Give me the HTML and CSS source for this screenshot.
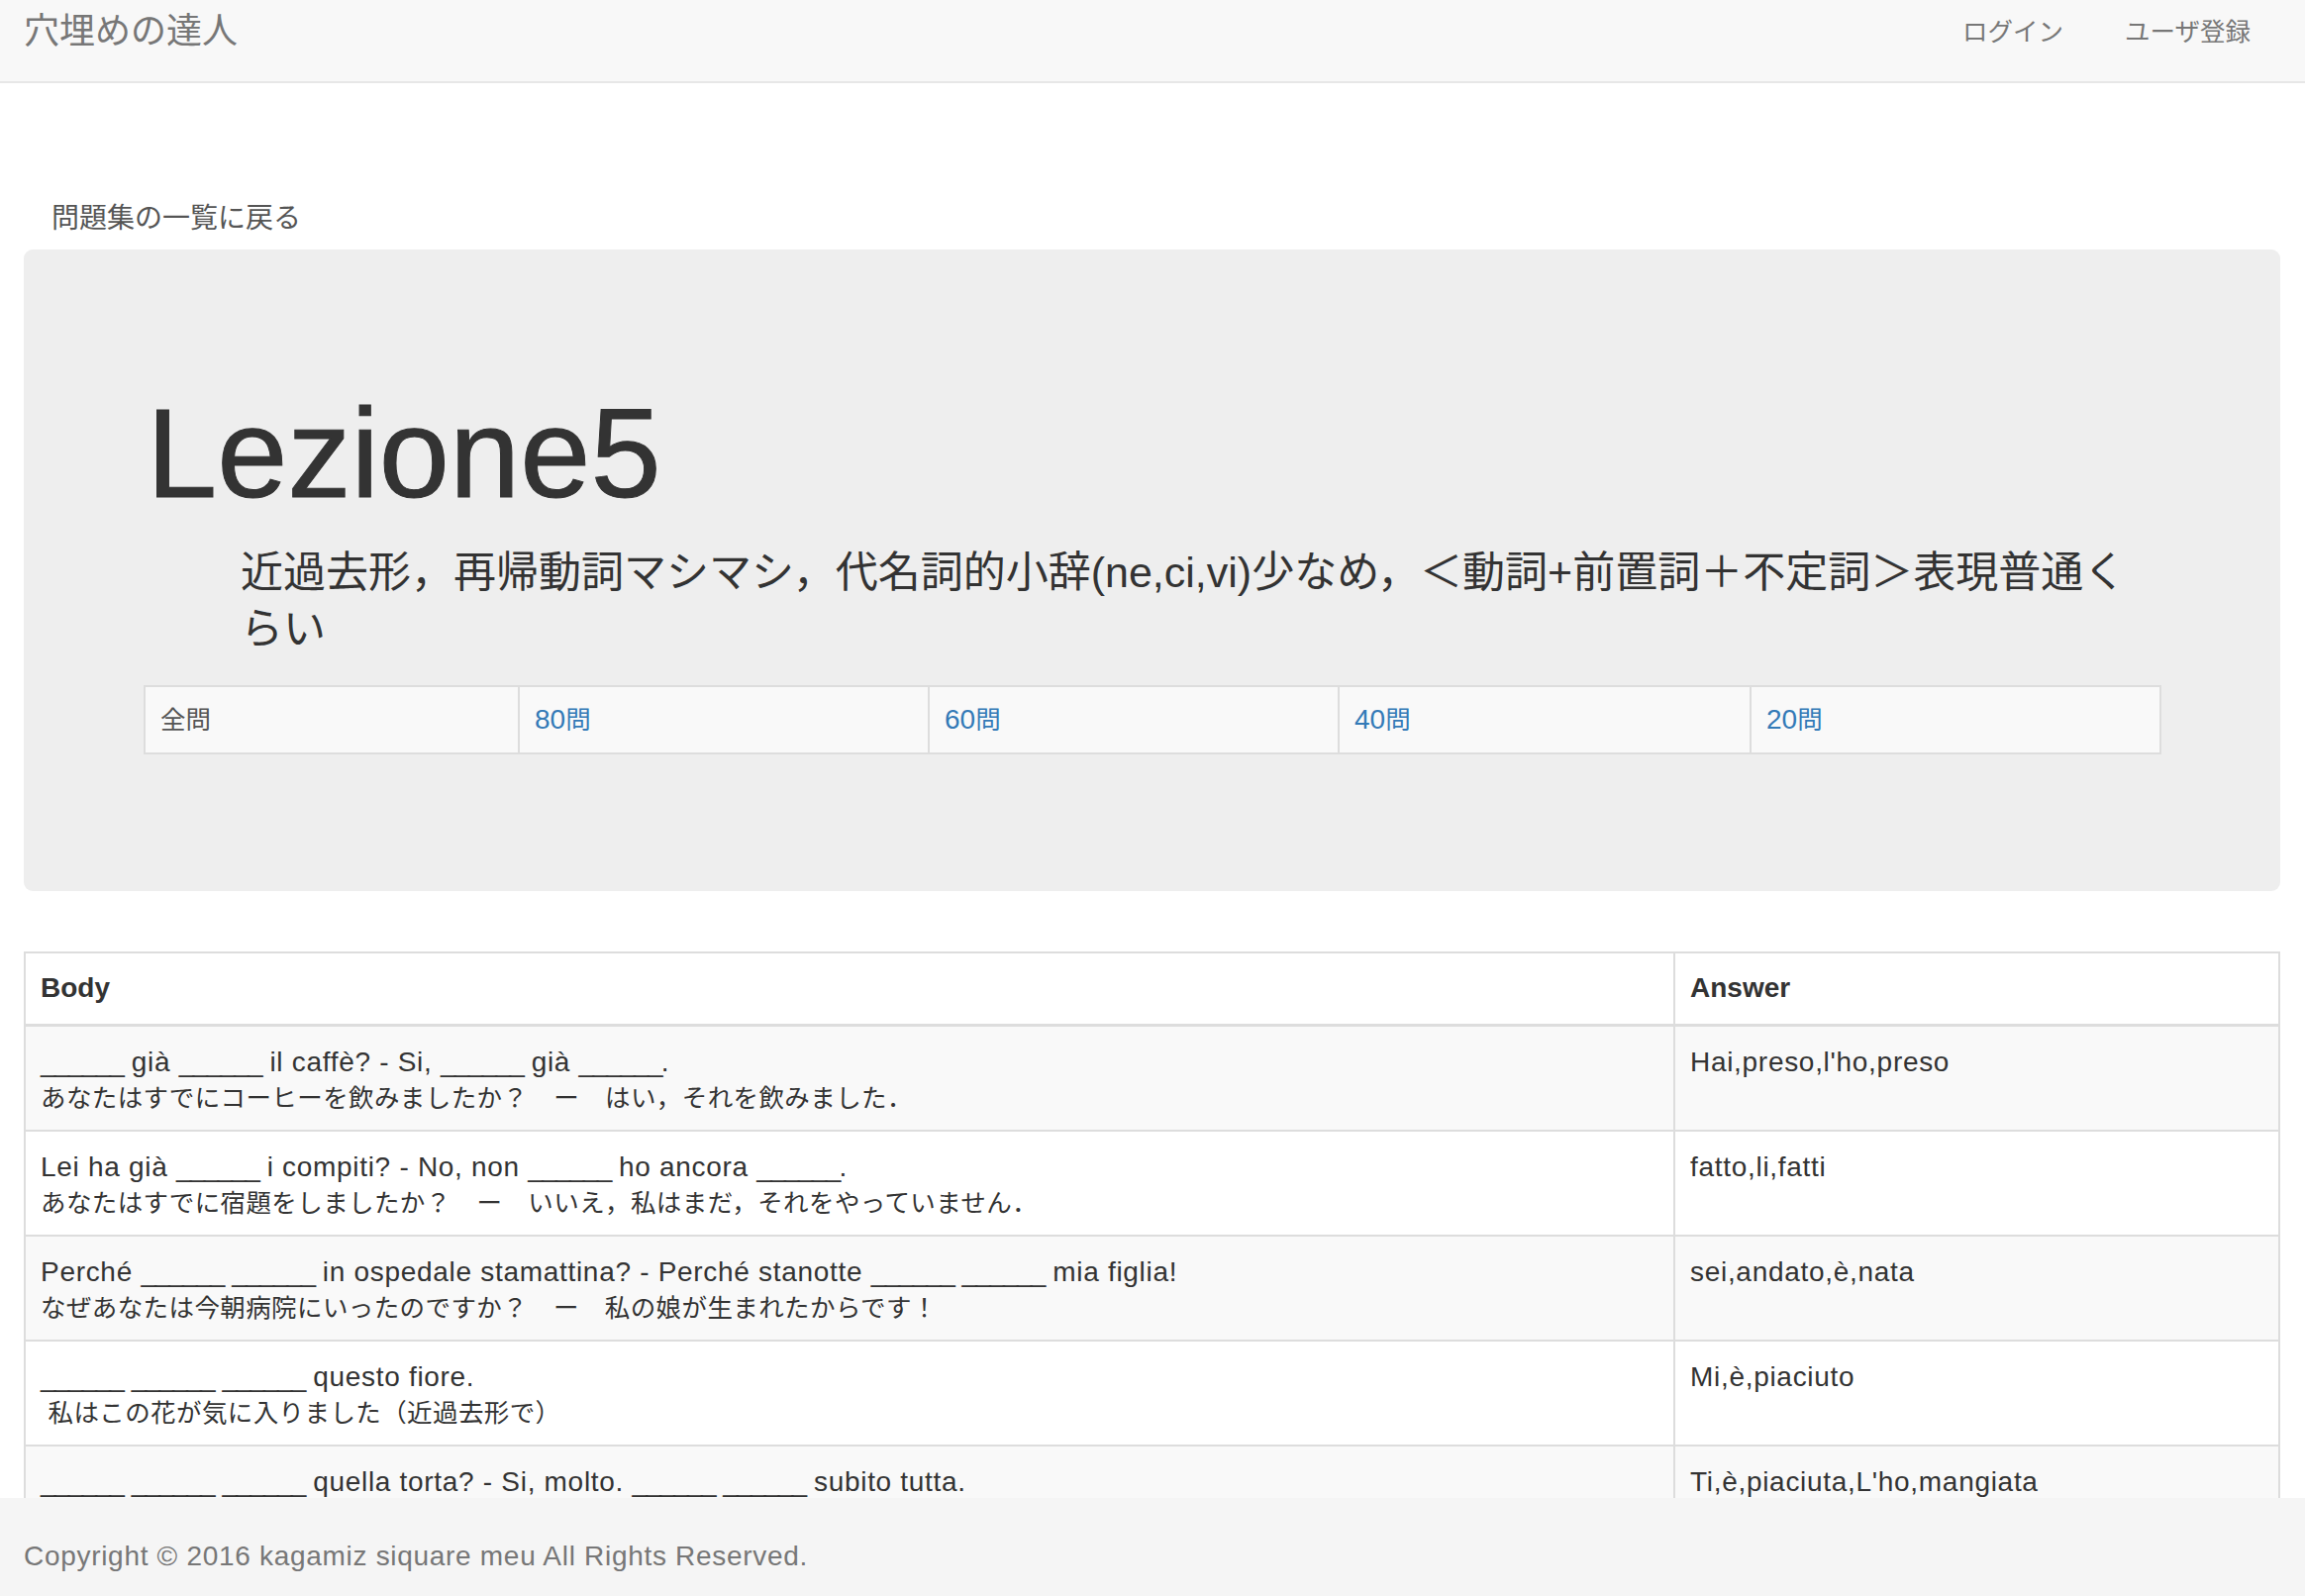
FILE: index.html
```html
<!DOCTYPE html>
<html lang="ja">
<head>
<meta charset="utf-8">
<title>Lezione5 | 穴埋めの達人</title>
<link rel="stylesheet" href="styles.css">
</head>
<body>
<nav class="navbar">
  <a class="brand" href="#">穴埋めの達人</a>
  <ul class="nav">
    <li><a href="#">ログイン</a></li>
    <li><a href="#">ユーザ登録</a></li>
  </ul>
</nav>
<main class="container">
  <div class="back"><a href="#">問題集の一覧に戻る</a></div>
  <section class="jumbotron">
    <h1>Lezione5</h1>
    <p class="lead">近過去形，再帰動詞マシマシ，代名詞的小辞(ne,ci,vi)少なめ，＜動詞+前置詞＋不定詞＞表現普通くらい</p>
    <div class="counts">
      <div class="cell"><span class="ja-inline">全問</span></div>
      <div class="cell"><a href="#">80<span class="ja-inline">問</span></a></div>
      <div class="cell"><a href="#">60<span class="ja-inline">問</span></a></div>
      <div class="cell"><a href="#">40<span class="ja-inline">問</span></a></div>
      <div class="cell"><a href="#">20<span class="ja-inline">問</span></a></div>
    </div>
  </section>
  <table class="questions">
    <colgroup><col class="col-body"><col class="col-answer"></colgroup>
    <thead>
      <tr><th>Body</th><th>Answer</th></tr>
    </thead>
    <tbody>
      <tr>
        <td><span class="blank">______</span> già <span class="blank">______</span> il caffè? - Si, <span class="blank">______</span> già <span class="blank">______</span>.<span class="ja">あなたはすでにコーヒーを飲みましたか？　ー　はい，それを飲みました．</span></td>
        <td>Hai,preso,l'ho,preso</td>
      </tr>
      <tr>
        <td>Lei ha già <span class="blank">______</span> i compiti? - No, non <span class="blank">______</span> ho ancora <span class="blank">______</span>.<span class="ja">あなたはすでに宿題をしましたか？　ー　いいえ，私はまだ，それをやっていません．</span></td>
        <td>fatto,li,fatti</td>
      </tr>
      <tr>
        <td>Perché <span class="blank">______</span> <span class="blank">______</span> in ospedale stamattina? - Perché stanotte <span class="blank">______</span> <span class="blank">______</span> mia figlia!<span class="ja">なぜあなたは今朝病院にいったのですか？　ー　私の娘が生まれたからです！</span></td>
        <td>sei,andato,è,nata</td>
      </tr>
      <tr>
        <td><span class="blank">______</span> <span class="blank">______</span> <span class="blank">______</span> questo fiore.<span class="ja">&nbsp;私はこの花が気に入りました（近過去形で）</span></td>
        <td>Mi,è,piaciuto</td>
      </tr>
      <tr>
        <td><span class="blank">______</span> <span class="blank">______</span> <span class="blank">______</span> quella torta? - Si, molto. <span class="blank">______</span> <span class="blank">______</span> subito tutta.</td>
        <td>Ti,è,piaciuta,L'ho,mangiata</td>
      </tr>
    </tbody>
  </table>
</main>
<footer class="footer">
  <p>Copyright © 2016 kagamiz siquare meu All Rights Reserved.</p>
</footer>
</body>
</html>
```

FILE: styles.css
```css
html, body {
  margin: 0;
  padding: 0;
}

body {
  font-family: "Liberation Sans", "Noto Sans CJK JP", sans-serif;
  font-size: 28px;
  line-height: 36px;
  color: #333;
  background: #fff;
}

a {
  text-decoration: none;
}

/* Navbar */
.navbar {
  display: flex;
  justify-content: space-between;
  align-items: flex-start;
  height: 82px;
  padding: 0 24px;
  background: #f8f8f8;
  border-bottom: 2px solid #e7e7e7;
}

.brand {
  padding-top: 6px;
  font-family: "Noto Sans CJK JP", sans-serif;
  font-size: 36px;
  line-height: 44px;
  color: #777;
}

.nav {
  display: flex;
  margin: 0;
  padding: 0;
  list-style: none;
}

.nav a {
  display: block;
  padding: 12px 31px 0;
  font-family: "Noto Sans CJK JP", sans-serif;
  font-size: 25.5px;
  line-height: 36px;
  color: #777;
}

/* Main */
.container {
  padding: 0 25px 160px 24px;
}

.back {
  height: 40px;
  padding: 114px 0 0 28px;
  margin-bottom: 14px;
  font-family: "Noto Sans CJK JP", sans-serif;
  font-size: 28px;
  line-height: 40px;
}

.back a {
  color: #555;
}

/* Jumbotron */
.jumbotron {
  padding: 135px 120px 138px 115px;
  background: #eee;
  border-radius: 9px;
}

.jumbotron h1 {
  margin: 0 0 0 9px;
  font-size: 128px;
  line-height: 141px;
  font-weight: normal;
  color: #333;
  -webkit-text-stroke: 1px #333;
}

.lead {
  margin: 22px 0 0;
  padding: 0 20px 0 104px;
  font-size: 43px;
  line-height: 57px;
}

.counts {
  display: grid;
  grid-template-columns: 376px 414px 414px 416px 1fr;
  margin: 28px 0 0 6px;
  background: #f9f9f9;
  border: 2px solid #ddd;
}

.counts .cell {
  padding: 15px;
  line-height: 36px;
  color: #555;
  border-left: 2px solid #ddd;
}

.counts .cell:first-child {
  border-left: 0;
}

.counts a {
  color: #337ab7;
}

.ja-inline {
  font-size: 25.5px;
}

/* Questions table */
.questions {
  width: 100%;
  margin-top: 61px;
  border-collapse: collapse;
  table-layout: fixed;
  border: 2px solid #ddd;
}

.col-body {
  width: 1666px;
}

.questions th,
.questions td {
  text-align: left;
  vertical-align: top;
  border: 2px solid #ddd;
}

.questions th {
  padding: 17px 15px 18px;
  font-weight: bold;
}

.questions td {
  padding: 18px 15px 14px;
  letter-spacing: 0.7px;
}

.questions thead th {
  border-bottom-width: 3px;
}

.questions tbody tr:nth-child(odd) {
  background: #f9f9f9;
}

.blank {
  letter-spacing: -1.7px;
}

.ja {
  display: block;
  font-size: 25.5px;
  letter-spacing: 0.4px;
}

/* Footer */
.footer {
  position: fixed;
  left: 0;
  right: 0;
  bottom: 0;
  height: 99px;
  background: #f5f5f5;
}

.footer p {
  margin: 0;
  padding: 39px 24px 0;
  font-size: 28px;
  line-height: 40px;
  letter-spacing: 0.7px;
  color: #777;
}
```
